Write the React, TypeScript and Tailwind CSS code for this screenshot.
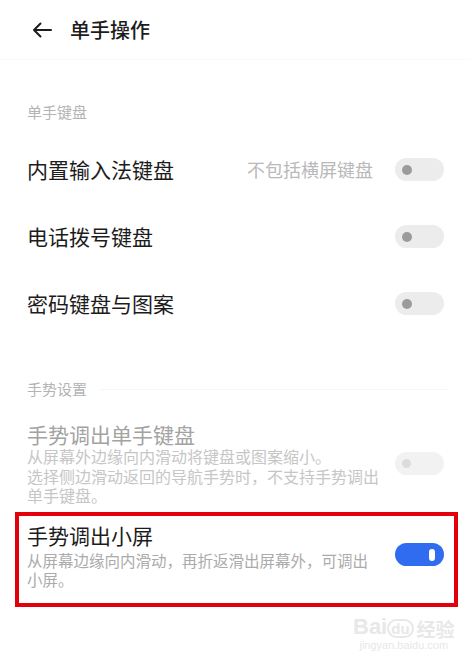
import React from 'react'

const font = { fontFamily: '"Noto Sans CJK SC", "Noto Sans", sans-serif' }
const latin = { fontFamily: '"Liberation Sans", sans-serif' }

function Toggle({ on = false, disabled = false }: { on?: boolean; disabled?: boolean }) {
  if (on) {
    return (
      <div className="w-[49px] h-[23px] rounded-full bg-[#2f6cf0] flex items-center justify-end pr-[9px] shrink-0">
        <div className="w-[6px] h-[12px] rounded-full bg-white" />
      </div>
    )
  }
  return (
    <div
      className={
        disabled
          ? 'w-[49px] h-[23px] rounded-full bg-[#f2f2f2] flex items-center pl-[7px] shrink-0'
          : 'w-[49px] h-[23px] rounded-full bg-[#ececec] flex items-center pl-[7px] shrink-0'
      }
    >
      <div className={disabled ? 'w-[9px] h-[9px] rounded-full bg-[#dcdcdc]' : 'w-[10px] h-[10px] rounded-full bg-[#9b9b9b]'} />
    </div>
  )
}

function SwitchRow({ title, hint }: { title: string; hint?: string }) {
  return (
    <div className="h-[67px] flex items-center pl-[27px] pr-[26px]">
      <span className="text-[21px] text-[#1c1c1c]">{title}</span>
      {hint && <span className="ml-auto mr-[22px] text-[18px] text-[#b9b9b9]">{hint}</span>}
      <div className={hint ? '' : 'ml-auto'}>
        <Toggle />
      </div>
    </div>
  )
}

export default function App() {
  return (
    <div className="relative w-[470px] h-[662px] bg-white overflow-hidden" style={font}>
      <div className="h-[60px] flex items-center pl-[32px] border-b border-[#fafafa]">
        <svg width="20" height="16" viewBox="0 0 20 16" fill="none" stroke="#1c1c1c" strokeWidth="2" strokeLinecap="round" strokeLinejoin="round">
          <path d="M19 8H2M8.5 1.5 2 8l6.5 6.5" />
        </svg>
        <span className="ml-[18px] text-[20px] font-medium text-[#1c1c1c]">单手操作</span>
      </div>

      <div className="mt-[42px] h-[20px] pl-[27px] text-[15px] leading-[20px] text-[#b4b4b4]">单手键盘</div>
      <div className="mt-[14px]">
        <SwitchRow title="内置输入法键盘" hint="不包括横屏键盘" />
        <SwitchRow title="电话拨号键盘" />
        <SwitchRow title="密码键盘与图案" />
      </div>

      <div className="mt-[42px] h-[20px] pl-[27px] flex items-center gap-3 pr-[22px]">
        <span className="text-[15px] leading-[20px] text-[#b4b4b4]">手势设置</span>
        <div className="flex-1 h-px bg-[#f7f7f7]" />
      </div>

      <div className="mt-[22px] flex items-center pl-[27px] pr-[26px]">
        <div className="flex-1">
          <div className="text-[21px] leading-[26px] text-[#a3a3a3]">手势调出单手键盘</div>
          <div className="text-[16px] leading-[19.5px] text-[#c6c6c6] w-[356px]">
            从屏幕外边缘向内滑动将键盘或图案缩小。
            <br />
            选择侧边滑动返回的导航手势时，不支持手势调出单手键盘。
          </div>
        </div>
        <Toggle disabled />
      </div>

      <div className="mt-[6px] ml-[15px] mr-[12px] border-4 border-[#e3000b] pl-[8px] pr-[10px] pt-[5px] pb-[14px] flex items-center">
        <div className="flex-1">
          <div className="text-[21px] leading-[28px] text-[#1c1c1c]">手势调出小屏</div>
          <div className="mt-[2px] text-[15.5px] leading-[19px] text-[#ababab] w-[345px]">
            从屏幕边缘向内滑动，再折返滑出屏幕外，可调出小屏。
          </div>
        </div>
        <Toggle on />
      </div>

      <div className="absolute left-[353px] top-[616px] flex flex-col items-center text-[#e8e8e8]">
        <div className="flex items-end leading-none">
          <span className="text-[22px] font-bold" style={latin}>Bai</span>
          <span className="text-[15px] font-bold border-2 border-[#e8e8e8] rounded-full px-[2px]" style={latin}>du</span>
          <span className="ml-[3px] text-[19px] font-bold">经验</span>
        </div>
        <span className="text-[11px] leading-[15px]" style={latin}>jingyan.baidu.com</span>
      </div>
    </div>
  )
}
